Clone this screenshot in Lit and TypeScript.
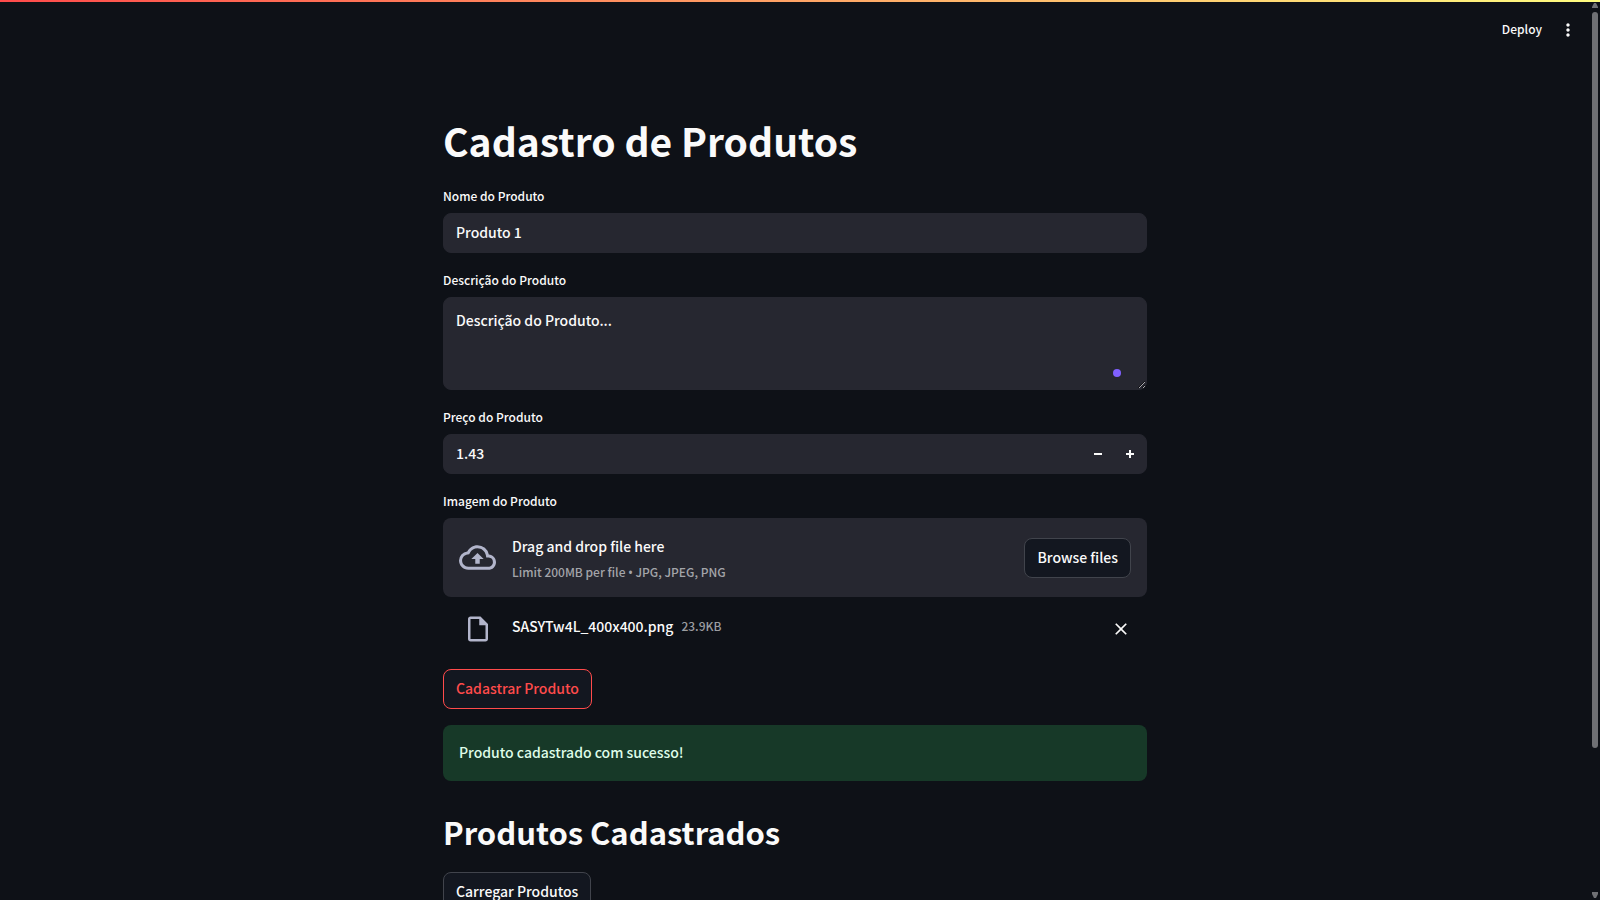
import { LitElement, html, css, svg } from "lit";
import { customElement, state } from "lit/decorators.js";

const icon = (size: number, path: string) => html`<svg
  width=${size} height=${size} viewBox="0 0 24 24" fill="currentColor" aria-hidden="true"
>${svg`<path d=${path}></path>`}</svg>`;

const CLOUD =
  "M19.35 10.04A7.49 7.49 0 0012 4C9.11 4 6.6 5.64 5.35 8.04A5.994 5.994 0 000 14c0 3.31 2.69 6 6 6h13c2.76 0 5-2.24 5-5 0-2.64-2.05-4.78-4.65-4.96zM19 18H6c-2.21 0-4-1.79-4-4 0-2.05 1.53-3.76 3.56-3.97l1.07-.11.5-.95A5.469 5.469 0 0112 6c2.62 0 4.88 1.86 5.39 4.43l.3 1.5 1.53.11A2.98 2.98 0 0122 15c0 1.65-1.35 3-3 3zM8 13h2.55v3h2.9v-3H16l-4-4z";
const FILE =
  "M14 2H6c-1.1 0-1.99.9-1.99 2L4 20c0 1.1.89 2 1.99 2H18c1.1 0 2-.9 2-2V8l-6-6zM6 20V4h7v5h5v11H6z";
const CLOSE =
  "M19 6.41L17.59 5 12 10.59 6.41 5 5 6.41 10.59 12 5 17.59 6.41 19 12 13.41 17.59 19 19 17.59 13.41 12z";
const DOTS =
  "M12 8c1.1 0 2-.9 2-2s-.9-2-2-2-2 .9-2 2 .9 2 2 2zm0 2c-1.1 0-2 .9-2 2s.9 2 2 2 2-.9 2-2-.9-2-2-2zm0 6c-1.1 0-2 .9-2 2s.9 2 2 2 2-.9 2-2-.9-2-2-2z";

@customElement("app-root")
export class AppRoot extends LitElement {
  @state() private price = 1.43;
  @state() private uploaded = true;

  static styles = css`
    :host {
      display: flex;
      flex-direction: column;
      height: 100vh;
      overflow: hidden;
      background: #0e1117;
      color: #fafafa;
      color-scheme: dark;
      font-family: "Source Sans Pro", "Noto Sans CJK SC", sans-serif;
      font-size: 14px;
      font-weight: 500;
      line-height: 24px;
    }
    * {
      box-sizing: border-box;
    }
    svg {
      display: block;
    }
    button,
    input,
    textarea {
      font: inherit;
      color: inherit;
      margin: 0;
    }
    button {
      cursor: pointer;
    }
    .decoration {
      flex: none;
      height: 2px;
      background: linear-gradient(90deg, #ff4b4b, #fffd80);
    }
    .frame {
      display: flex;
      flex: 1;
      min-height: 0;
    }
    .scroll {
      flex: 1;
      overflow-y: auto;
      scrollbar-width: none;
    }
    .toolbar {
      display: flex;
      justify-content: flex-end;
      align-items: center;
      gap: 10px;
      height: 56px;
      padding-right: 6px;
    }
    .tool {
      display: flex;
      padding: 0 0 2px;
      border: 0;
      background: none;
      font-size: 12px;
    }
    .menu {
      padding: 6px;
    }
    .content {
      max-width: 736px;
      margin: 0 auto;
      padding: 38px 16px 160px;
    }
    h1,
    h2 {
      margin: 0;
      font-weight: 700;
    }
    h1 {
      padding: 18px 0;
      font-size: 39px;
      line-height: 53px;
    }
    h2 {
      padding: 13px 0 3px;
      font-size: 31px;
      line-height: 43px;
    }
    .stack {
      display: flex;
      flex-direction: column;
      gap: 16px;
    }
    .field {
      display: flex;
      flex-direction: column;
      gap: 6px;
    }
    .label {
      font-size: 12px;
      line-height: 22px;
    }
    .box {
      width: 100%;
      border: 1px solid #262730;
      border-radius: 8px;
      background: #262730;
      outline: none;
    }
    .line {
      height: 40px;
      padding: 0 12px 2px;
    }
    .area-wrap {
      display: grid;
      position: relative;
    }
    .area {
      display: block;
      height: 93px;
      padding: 10px 12px;
      resize: vertical;
    }
    .status-dot {
      position: absolute;
      right: 26px;
      bottom: 13px;
      width: 8px;
      height: 8px;
      border-radius: 50%;
      background: #8060ff;
    }
    .number {
      display: flex;
      overflow: hidden;
      height: 40px;
    }
    .number input {
      flex: 1;
      min-width: 0;
      padding: 0 12px 2px;
      border: 0;
      background: none;
      outline: none;
      appearance: textfield;
    }
    .number input::-webkit-inner-spin-button {
      appearance: none;
      display: none;
    }
    .step {
      display: grid;
      place-items: center;
      width: 32px;
      padding: 0;
      border: 0;
      background: none;
    }
    .dropzone {
      display: flex;
      align-items: center;
      gap: 16px;
      padding: 16px;
      border-radius: 8px;
      background: #262730;
    }
    .glyph {
      display: grid;
      place-items: center;
      width: 37px;
      color: #b2b5cb;
    }
    .drop-text {
      display: flex;
      flex: 1;
      flex-direction: column;
      gap: 4px;
    }
    .muted {
      color: #a3a4a9;
      font-size: 12px;
    }
    .file-name .muted {
      color: #9b9da1;
    }
    .dropzone .muted {
      line-height: 19px;
    }
    .bullet {
      font-family: "Noto Sans", sans-serif;
      line-height: 1;
    }
    .btn {
      align-self: flex-start;
      height: 40px;
      padding: 0 12px 2px;
      border: 1px solid #41444c;
      border-radius: 8px;
      background: #131720;
    }
    .dropzone .btn {
      align-self: center;
    }
    .btn.active {
      border-color: #ff4b4b;
      color: #ff4b4b;
    }
    .file {
      display: flex;
      align-items: center;
      gap: 16px;
      height: 56px;
      padding: 8px 16px 0;
    }
    .file-name {
      display: flex;
      flex: 1;
      gap: 8px;
      padding-bottom: 6px;
    }
    .remove {
      padding: 0;
      border: 0;
      background: none;
    }
    .alert {
      padding: 15px 16px 17px;
      border-radius: 8px;
      background: #173928;
      color: #dffde9;
    }
    .rail {
      display: flex;
      flex-direction: column;
      align-items: center;
      gap: 4px;
      width: 10px;
      padding: 1px 0 2px;
      color: #6f7074;
    }
    .track {
      flex: 1;
    }
    .thumb {
      width: 6px;
      border-radius: 3px;
      background: currentColor;
    }
  `;

  private step(delta: number) {
    this.price = Math.round((this.price + delta) * 100) / 100;
  }

  private field(id: string, label: string, control: unknown) {
    return html`<div class="field">
      <label class="label" for=${id}>${label}</label>
      ${control}
    </div>`;
  }

  render() {
    return html`
      <div class="decoration"></div>
      <div class="frame">
        <div class="scroll">
          <header class="toolbar">
            <button class="tool" type="button">Deploy</button>
            <button class="tool menu" type="button" aria-label="Menu">${icon(20, DOTS)}</button>
          </header>
          <main class="content">
            <h1>Cadastro de Produtos</h1>
            <div class="stack">
              ${this.field("name", "Nome do Produto", html`<input id="name" class="box line" type="text" value="Produto 1" />`)}
              ${this.field(
                "description",
                "Descrição do Produto",
                html`<div class="area-wrap">
                  <textarea id="description" class="box area" .value=${"Descrição do Produto..."}></textarea>
                  <span class="status-dot"></span>
                </div>`
              )}
              ${this.field(
                "price",
                "Preço do Produto",
                html`<div class="box number">
                  <input id="price" type="number" step="0.01" lang="en" .value=${this.price.toFixed(2)} />
                  <button class="step" type="button" aria-label="Diminuir" @click=${() => this.step(-0.01)}>
                    <svg width="8" height="8" viewBox="0 0 8 8" fill="currentColor"><path d="M0 3v2h8V3z"></path></svg>
                  </button>
                  <button class="step" type="button" aria-label="Aumentar" @click=${() => this.step(0.01)}>
                    <svg width="8" height="8" viewBox="0 0 8 8" fill="currentColor"><path d="M3 0v3H0v2h3v3h2V5h3V3H5V0z"></path></svg>
                  </button>
                </div>`
              )}
              <div>
                ${this.field(
                  "image",
                  "Imagem do Produto",
                  html`<section class="dropzone">
                    <input id="image" type="file" accept=".jpg,.jpeg,.png" hidden />
                    <span class="glyph">${icon(37, CLOUD)}</span>
                    <div class="drop-text">
                      <span>Drag and drop file here</span>
                      <span class="muted">Limit 200MB per file <span class="bullet">•</span> JPG, JPEG, PNG</span>
                    </div>
                    <button class="btn" type="button">Browse files</button>
                  </section>`
                )}
                ${this.uploaded
                  ? html`<div class="file">
                      <span class="glyph">${icon(30, FILE)}</span>
                      <div class="file-name">
                        <span>SASYTw4L_400x400.png</span>
                        <span class="muted">23.9KB</span>
                      </div>
                      <button class="remove" type="button" aria-label="Remover" @click=${() => (this.uploaded = false)}>
                        ${icon(20, CLOSE)}
                      </button>
                    </div>`
                  : null}
              </div>
              <button class="btn active" type="button">Cadastrar Produto</button>
              <div class="alert" role="alert">Produto cadastrado com sucesso!</div>
              <h2>Produtos Cadastrados</h2>
              <button class="btn" type="button">Carregar Produtos</button>
            </div>
          </main>
        </div>
        <div class="rail" aria-hidden="true">
          <svg width="6" height="5" viewBox="0 0 6 5" fill="currentColor"><path d="M2 0h2l2 4v1H0V4z"></path></svg>
          <div class="track"><div class="thumb" style="height:84%"></div></div>
          <svg width="6" height="6" viewBox="0 0 6 6" fill="currentColor"><path d="M0 0h6v2L4 6H2L0 2z"></path></svg>
        </div>
      </div>
    `;
  }
}
